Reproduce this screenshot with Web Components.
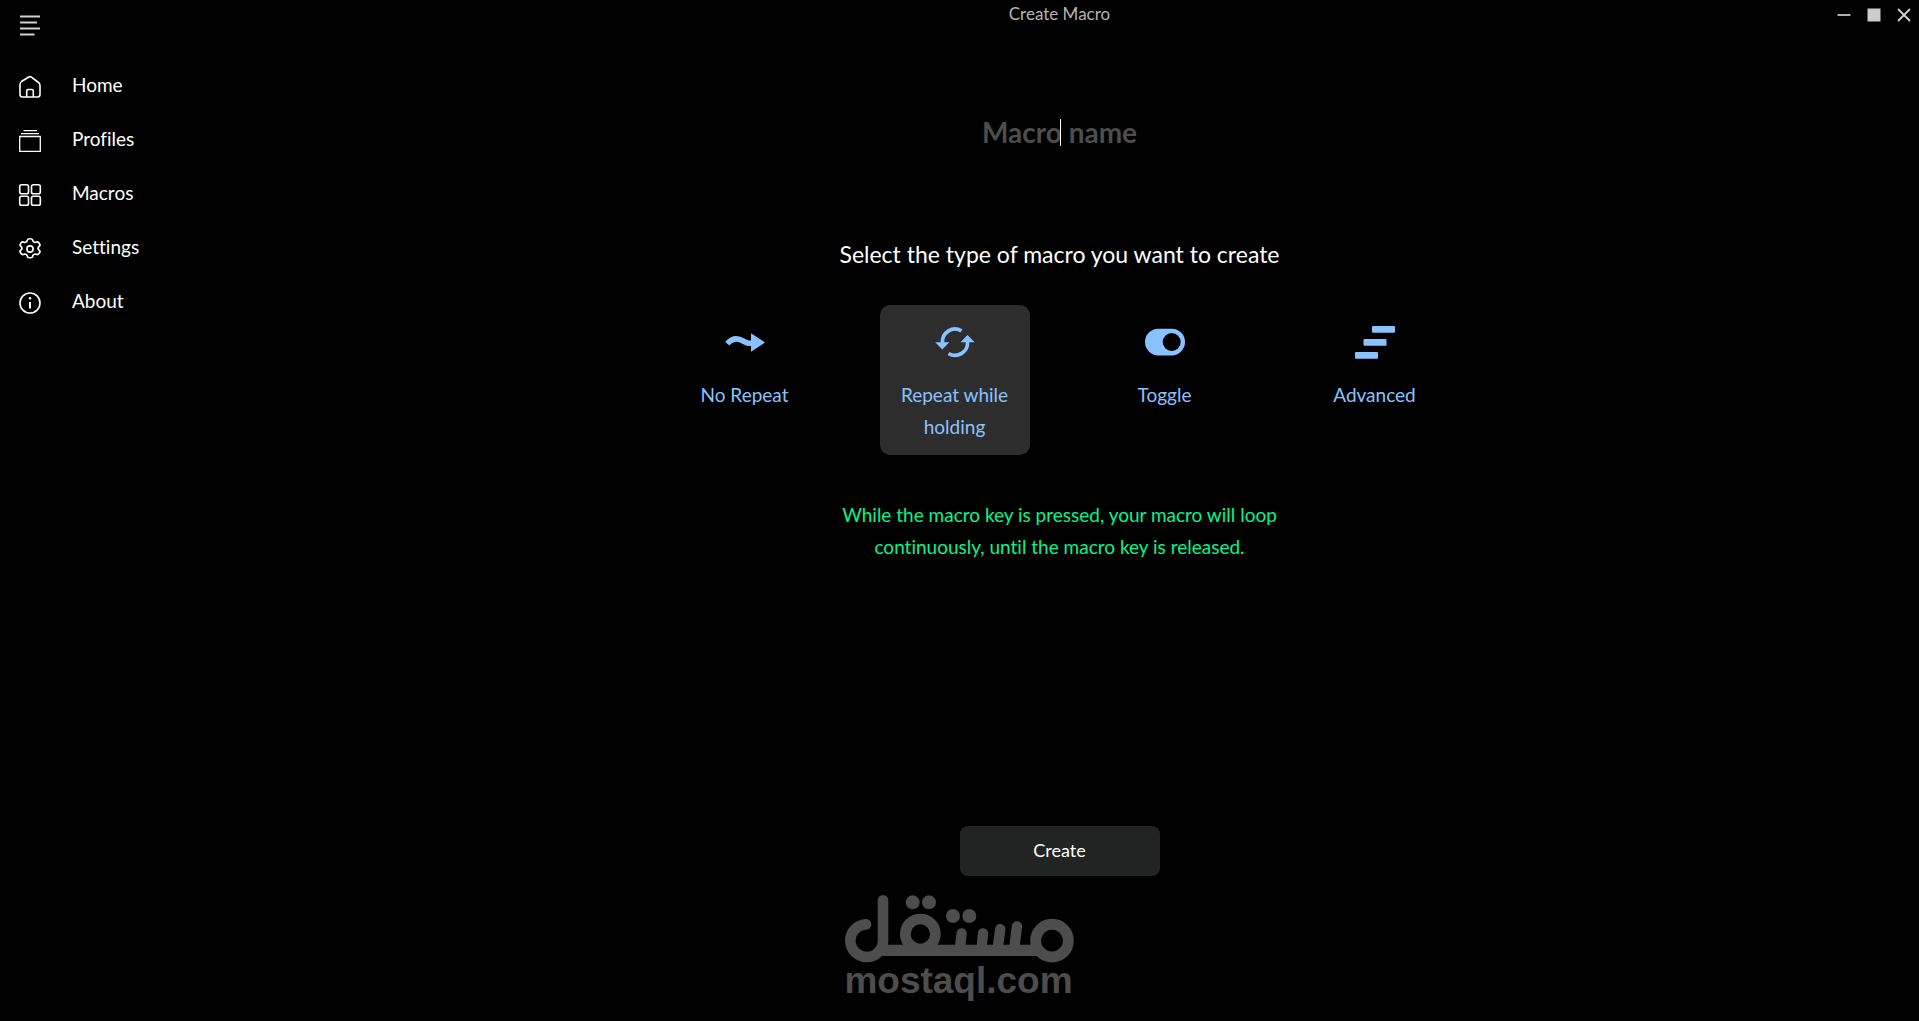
<!DOCTYPE html>
<html lang="en">
<head>
<meta charset="utf-8">
<meta name="viewport" content="width=device-width, initial-scale=1">
<title>Create Macro</title>
<style>
    html, body {
        margin: 0;
        background: #000;
        color: #fff;
        font-family: Lato, "Open Sans", sans-serif;
        font-variant-ligatures: none;
    }
</style>
</head>
<body>
<macro-app></macro-app>

<script>
const icons = {
    menu: `<path d="M1 4.500h20M1 10.500h17M1 16.500h20M1 22.500h14.500" stroke="#d0d0d0" stroke-width="1.800"/>`,
    home: `<path d="M1 8.500c0-1.200.5-2.200 1.500-3L9.300 1.300c1-.8 2.400-.8 3.400 0l6.800 5.200c1 .8 1.500 1.800 1.500 3V18.500c0 1.500-1 2.500-2.500 2.500h-15C2 21 1 20 1 18.500z"/><path d="M7.700 21v-6c0-.9.6-1.500 1.500-1.500h3.600c.9 0 1.500.6 1.500 1.500v6"/>`,
    profiles: `<path d="M.7 6.500h20.600v14.800H.7zM2 3.600h18M4.500.7h13.500" stroke-width="1.300"/>`,
    macros: `<rect x=".7" y=".7" width="8.800" height="9" rx="1.800"/><rect x="12.500" y=".7" width="8.800" height="9" rx="1.800"/><rect x=".7" y="12.300" width="8.800" height="9" rx="1.800"/><rect x="12.500" y="12.300" width="8.800" height="9" rx="1.800"/>`,
    settings: `<circle cx="11" cy="11" r="3.100"/><path transform="translate(-1.200 0) scale(1.110 1)" d="M8.400 2.700C8.600 1.500 9.400.8 10.500.8h1c1.100 0 1.900.7 2.100 1.900.2 1.300 1.500 2 2.700 1.500 1.200-.5 2.200-.2 2.800.8l.5.900c.6 1 .3 2-.6 2.800-1 .8-1 2.300 0 3.200.9.700 1.200 1.700.6 2.700l-.5.9c-.6 1-1.600 1.300-2.800.8-1.200-.5-2.500.2-2.700 1.500-.2 1.200-1 1.900-2.100 1.900h-1c-1.100 0-1.900-.7-2.100-1.900-.2-1.300-1.500-2-2.700-1.500-1.200.5-2.200.2-2.800-.8l-.5-.9c-.6-1-.3-2 .6-2.700 1-.9 1-2.400 0-3.200-.9-.8-1.200-1.800-.6-2.800l.5-.9c.6-1 1.600-1.300 2.800-.8 1.200.5 2.500-.2 2.700-1.500z"/>`,
    about: `<circle cx="11" cy="11" r="10"/><path d="M11 10v6.500" stroke-width="2"/><circle cx="11" cy="6.300" r="1.200" fill="currentColor" stroke="none"/>`
};

class SideLink extends HTMLElement {
    constructor() {
        super();
        this.attachShadow({ mode: "open" });
    }
    connectedCallback() {
        this.shadowRoot.innerHTML = `
            <style>
                :host { display: block; }
                a {
                    display: flex;
                    align-items: center;
                    gap: 31px;
                    height: 54px;
                    padding-left: 19px;
                    color: inherit;
                    text-decoration: none;
                    font-size: 19px;
                    line-height: 24px;
                }
                svg { width: 22px; height: 22px; overflow: visible; }
                span { padding-bottom: 4px; }
            </style>
            <a href="#${this.getAttribute("icon")}">
                <svg viewBox="0 0 22 22" fill="none" stroke="currentColor" stroke-width="1.600" aria-hidden="true">${icons[this.getAttribute("icon")]}</svg>
                <span><slot></slot></span>
            </a>
        `;
    }
}

class SideBar extends HTMLElement {
    constructor() {
        super();
        this.attachShadow({ mode: "open" });
    }
    connectedCallback() {
        this.shadowRoot.innerHTML = `
            <style>
                :host { display: block; }
                button {
                    display: block;
                    height: 50px;
                    margin-bottom: 10px;
                    padding: 0 0 0 19px;
                    border: 0;
                    background: none;
                }
                svg { display: block; width: 22px; height: 27px; }
            </style>
            <button type="button" aria-label="Menu">
                <svg viewBox="0 0 22 27" fill="none">${icons.menu}</svg>
            </button>
            <nav><slot></slot></nav>
        `;
    }
}

class TitleBar extends HTMLElement {
    constructor() {
        super();
        this.attachShadow({ mode: "open" });
    }
    connectedCallback() {
        this.shadowRoot.innerHTML = `
            <style>
                :host {
                    display: grid;
                    grid-template-columns: 1fr auto 1fr;
                    height: 30px;
                }
                h1 {
                    grid-column: 2;
                    margin: 0;
                    color: #b4b4b4;
                    font-size: 17px;
                    font-weight: 400;
                    line-height: 28px;
                }
                div { display: flex; justify-content: flex-end; }
                button {
                    width: 30px;
                    height: 30px;
                    padding: 0;
                    border: 0;
                    background: none;
                    color: #ccc;
                }
                svg { display: block; margin: auto; width: 14px; height: 14px; }
            </style>
            <h1><slot></slot></h1>
            <div>
                <button type="button" aria-label="Minimize"><svg viewBox="0 0 14 14"><path d="M.5 7h13" stroke="currentColor" stroke-width="1.700"/></svg></button>
                <button type="button" aria-label="Maximize"><svg viewBox="0 0 14 14"><path d="M.5.5h13v13H.5z" fill="currentColor"/></svg></button>
                <button type="button" aria-label="Close"><svg viewBox="0 0 14 14"><path d="M1 1l12 12M13 1L1 13" stroke="currentColor" stroke-width="2"/></svg></button>
            </div>
        `;
    }
}

class MacroName extends HTMLElement {
    constructor() {
        super();
        this.attachShadow({ mode: "open" });
    }
    connectedCallback() {
        this.shadowRoot.innerHTML = `
            <style>
                :host { display: block; position: relative; }
                input {
                    display: block;
                    box-sizing: border-box;
                    width: 100%;
                    height: 40px;
                    padding: 0;
                    border: 0;
                    outline: 0;
                    background: none;
                    color: #fff;
                    caret-color: transparent;
                    font: 700 28px Lato, sans-serif;
                    text-align: center;
                }
                input::placeholder { color: #4d4d4d; opacity: 1; }
                /* caret, shown while the field is empty */
                i {
                    position: absolute;
                    top: 7px;
                    left: 50%;
                    width: 1px;
                    height: 27px;
                    background: #fff;
                }
                input:not(:placeholder-shown) { caret-color: #fff; }
                input:not(:placeholder-shown) + i { display: none; }
            </style>
            <input type="text" placeholder="Macro name" aria-label="Macro name">
            <i></i>
        `;
    }
}

class MacroType extends HTMLElement {
    constructor() {
        super();
        this.attachShadow({ mode: "open" });
    }
    connectedCallback() {
        this.shadowRoot.innerHTML = `
            <style>
                :host { display: block; width: 150px; }
                button {
                    display: flex;
                    flex-direction: column;
                    align-items: center;
                    gap: 17px;
                    box-sizing: border-box;
                    width: 100%;
                    min-height: 150px;
                    padding: 17px 15px 12px;
                    border: 0;
                    border-radius: 10px;
                    background: none;
                    color: #8ac2ff;
                    font: inherit;
                    font-size: 19px;
                    line-height: 32px;
                }
                :host([selected]) button { background: #2d2d2d; }
                ::slotted(svg) { display: block; width: 40px; height: 40px; }
            </style>
            <button type="button" aria-pressed="${this.hasAttribute("selected")}">
                <slot name="icon"></slot>
                <span><slot></slot></span>
            </button>
        `;
    }
}

class ActionButton extends HTMLElement {
    constructor() {
        super();
        this.attachShadow({ mode: "open" });
    }
    connectedCallback() {
        this.shadowRoot.innerHTML = `
            <style>
                :host { display: block; }
                button {
                    width: 200px;
                    height: 50px;
                    padding: 0 0 2px;
                    border: 0;
                    border-radius: 8px;
                    background: #222423;
                    color: #fff;
                    font: inherit;
                    font-size: 18px;
                }
            </style>
            <button type="button"><slot></slot></button>
        `;
    }
}

class SiteMark extends HTMLElement {
    constructor() {
        super();
        this.attachShadow({ mode: "open" });
    }
    connectedCallback() {
        this.shadowRoot.innerHTML = `
            <style>
                :host {
                    display: flex;
                    flex-direction: column;
                    align-items: center;
                    color: #4d4d4d;
                    font: 700 37px/36px "Liberation Sans", Arial, sans-serif;
                    pointer-events: none;
                }
                svg { display: block; width: 230px; height: 68px; }
            </style>
            <svg viewBox="72 255 690 204" fill="none" stroke="currentColor" stroke-width="32" stroke-linecap="round" role="img" aria-label="مستقل">
                <path d="M138 343A49 49 0 1 0 189 392V271"/>
                <path d="M175 421H655" stroke-width="34" stroke-linecap="butt"/>
                <circle cx="301" cy="372" r="45"/>
                <circle cx="696" cy="392" r="49" stroke-width="33"/>
                <path d="M425 370L419 421M489 370L484 421M541 357L532 421M591 349L582 421" stroke-width="31"/>
                <g fill="currentColor" stroke="none">
                    <circle cx="278" cy="277" r="21"/>
                    <circle cx="327" cy="277" r="21"/>
                    <circle cx="399" cy="318" r="21"/>
                    <circle cx="448" cy="318" r="21"/>
                </g>
            </svg>
            <span><slot></slot></span>
        `;
    }
}

class MacroApp extends HTMLElement {
    constructor() {
        super();
        this.attachShadow({ mode: "open" });
    }
    connectedCallback() {
        this.shadowRoot.innerHTML = `
            <style>
                :host {
                    display: grid;
                    grid-template-columns: 200px 1fr;
                    min-height: 100vh;
                }
                main { display: flex; flex-direction: column; }
                .content {
                    flex: 1;
                    display: flex;
                    flex-direction: column;
                    align-items: center;
                    padding: 82px 20px 145px;
                }
                macro-name { width: 300px; }
                h2 {
                    margin: 86px 0 35px;
                    font-size: 23px;
                    font-weight: 400;
                    line-height: 32px;
                }
                .types {
                    display: flex;
                    flex-wrap: wrap;
                    justify-content: center;
                    gap: 60px;
                }
                p {
                    max-width: 450px;
                    margin: 44px 0;
                    color: #00f68e;
                    font-size: 19px;
                    line-height: 32px;
                    text-align: center;
                }
                action-button { margin-top: auto; }
                site-mark {
                    position: absolute;
                    left: 0;
                    right: 2px;
                    bottom: 22px;
                }
            </style>
            <side-bar>
                <side-link icon="home">Home</side-link>
                <side-link icon="profiles">Profiles</side-link>
                <side-link icon="macros">Macros</side-link>
                <side-link icon="settings">Settings</side-link>
                <side-link icon="about">About</side-link>
            </side-bar>
            <main>
                <title-bar>Create Macro</title-bar>
                <div class="content">
                    <macro-name></macro-name>
                    <h2>Select the type of macro you want to create</h2>
                    <div class="types">
                        <macro-type>
                            <svg slot="icon" viewBox="0 0 40 40" aria-hidden="true">
                                <path d="M2.300 21.700C6 17.500 11 15.300 17 18.500S23 21.300 28 21.300" fill="none" stroke="currentColor" stroke-width="5.500"/>
                                <path d="M26 11.300L40 20.500 26 29.700z" fill="currentColor"/>
                            </svg>
                            No Repeat
                        </macro-type>
                        <macro-type selected>
                            <svg slot="icon" viewBox="0 0 40 40" aria-hidden="true">
                                <g fill="none" stroke="currentColor" stroke-width="3.700">
                                    <path d="M7.500 21A12.600 12.600 0 0 1 26.500 8.900"/>
                                    <path d="M32.500 19.500A12.600 12.600 0 0 1 13.500 31.500"/>
                                </g>
                                <path d="M.2 20.200H14.300L7.300 27.500zM25.500 20.200H39.700L32.500 13z" fill="currentColor"/>
                            </svg>
                            Repeat while holding
                        </macro-type>
                        <macro-type>
                            <svg slot="icon" viewBox="0 0 40 40" aria-hidden="true">
                                <rect y="6.700" width="40" height="26.700" rx="13.300" fill="currentColor"/>
                                <circle cx="26.700" cy="20" r="9" fill="#000"/>
                            </svg>
                            Toggle
                        </macro-type>
                        <macro-type>
                            <svg slot="icon" viewBox="0 0 40 40" fill="currentColor" aria-hidden="true">
                                <rect x="17" y="4" width="23" height="6.700" rx="1"/>
                                <rect x="8.500" y="17" width="23" height="6.700" rx="1"/>
                                <rect y="30" width="23" height="6.700" rx="1"/>
                            </svg>
                            Advanced
                        </macro-type>
                    </div>
                    <p>While the macro key is pressed, your macro will loop continuously, until the macro key is released.</p>
                    <action-button>Create</action-button>
                </div>
            </main>
            <site-mark>mostaql.com</site-mark>
        `;
    }
}

customElements.define('side-link', SideLink);
customElements.define('side-bar', SideBar);
customElements.define('title-bar', TitleBar);
customElements.define('macro-name', MacroName);
customElements.define('macro-type', MacroType);
customElements.define('action-button', ActionButton);
customElements.define('site-mark', SiteMark);
customElements.define('macro-app', MacroApp);
</script>
</body>
</html>
